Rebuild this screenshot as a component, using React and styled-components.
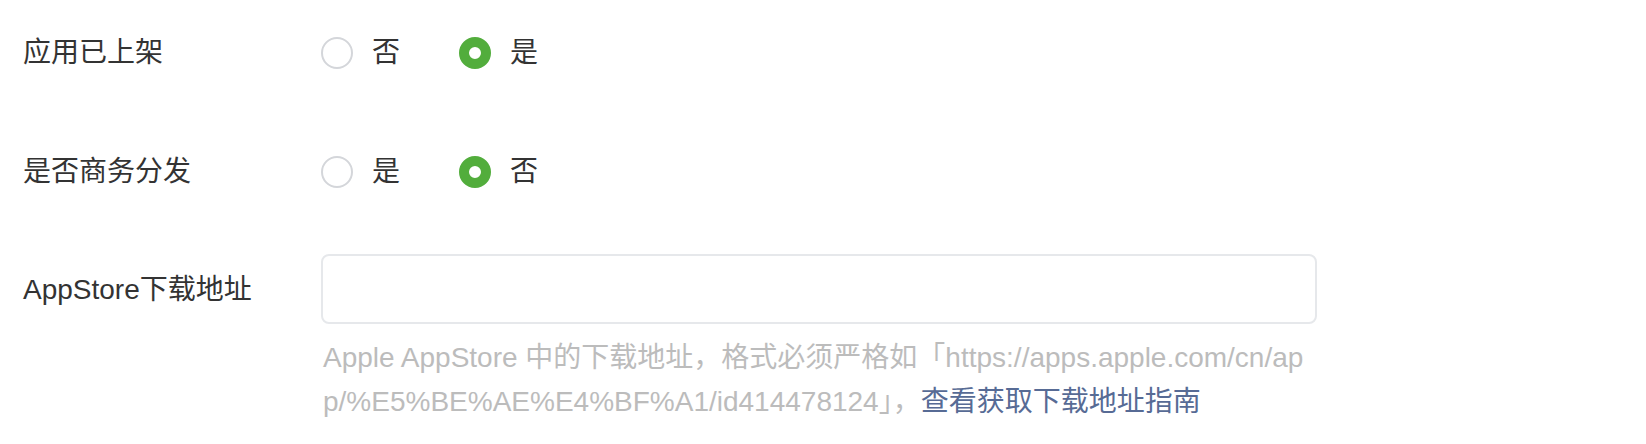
import React, { useState } from 'react'
import styled, { createGlobalStyle } from 'styled-components'

const GlobalStyle = createGlobalStyle`
    body {
        margin: 0;
        background: #fff;
        font-family: "Liberation Sans", "Noto Sans CJK SC", sans-serif;
        color: #333;
    }
`

const Form = styled.div`
    padding: 21px 0 0 23px;
`

const Row = styled.div`
    display: flex;
    align-items: ${(p) => (p.$top ? 'flex-start' : 'center')};
    min-height: 64px;
    margin-bottom: ${(p) => p.$gap || 0}px;
`

const Label = styled.div`
    width: 298px;
    flex-shrink: 0;
    font-size: 28px;
    line-height: ${(p) => (p.$tall ? '72px' : '40px')};
    color: #333;
`

const Options = styled.div`
    display: flex;
    align-items: center;
`

const Option = styled.label`
    display: flex;
    align-items: center;
    margin-right: 59px;
    font-size: 28px;
    line-height: 40px;
    cursor: pointer;
`

const Circle = styled.span`
    box-sizing: border-box;
    width: 32px;
    height: 32px;
    border-radius: 50%;
    margin-right: 19px;
    border: ${(p) => (p.$on ? '10px solid #52ad3c' : '2px solid #d4d6da')};
    background: #fff;
`

const Field = styled.div`
    width: 1020px;
`

const Input = styled.input`
    box-sizing: border-box;
    display: block;
    width: 996px;
    height: 70px;
    border: 2px solid #e6e8eb;
    border-radius: 8px;
    outline: none;
    padding: 0 20px;
    font-size: 28px;
    font-family: inherit;
`

const Help = styled.p`
    margin: 12px 0 0 2px;
    width: 1010px;
    font-size: 28px;
    line-height: 44px;
    color: #bcbcbc;
    word-break: break-all;
`

const Link = styled.a`
    color: #576b95;
    text-decoration: none;
`

const RadioGroup = ({ items, value, onChange }) => (
    <Options>
        {items.map((it) => (
            <Option key={it} onClick={() => onChange(it)}>
                <Circle $on={value === it} />
                {it}
            </Option>
        ))}
    </Options>
)

export default function App() {
    const [listed, setListed] = useState('是')
    const [business, setBusiness] = useState('否')

    return (
        <>
            <GlobalStyle />
            <Form>
                <Row $gap={55}>
                    <Label>应用已上架</Label>
                    <RadioGroup items={['否', '是']} value={listed} onChange={setListed} />
                </Row>
                <Row $gap={50}>
                    <Label>是否商务分发</Label>
                    <RadioGroup items={['是', '否']} value={business} onChange={setBusiness} />
                </Row>
                <Row $top>
                    <Label $tall>AppStore下载地址</Label>
                    <Field>
                        <Input />
                        <Help>
                            Apple AppStore 中的下载地址，格式必须严格如「https://apps.apple.com/cn/app/%E5%BE%AE%E4%BF%A1/id414478124」，<Link href="#">查看获取下载地址指南</Link>
                        </Help>
                    </Field>
                </Row>
            </Form>
        </>
    )
}
